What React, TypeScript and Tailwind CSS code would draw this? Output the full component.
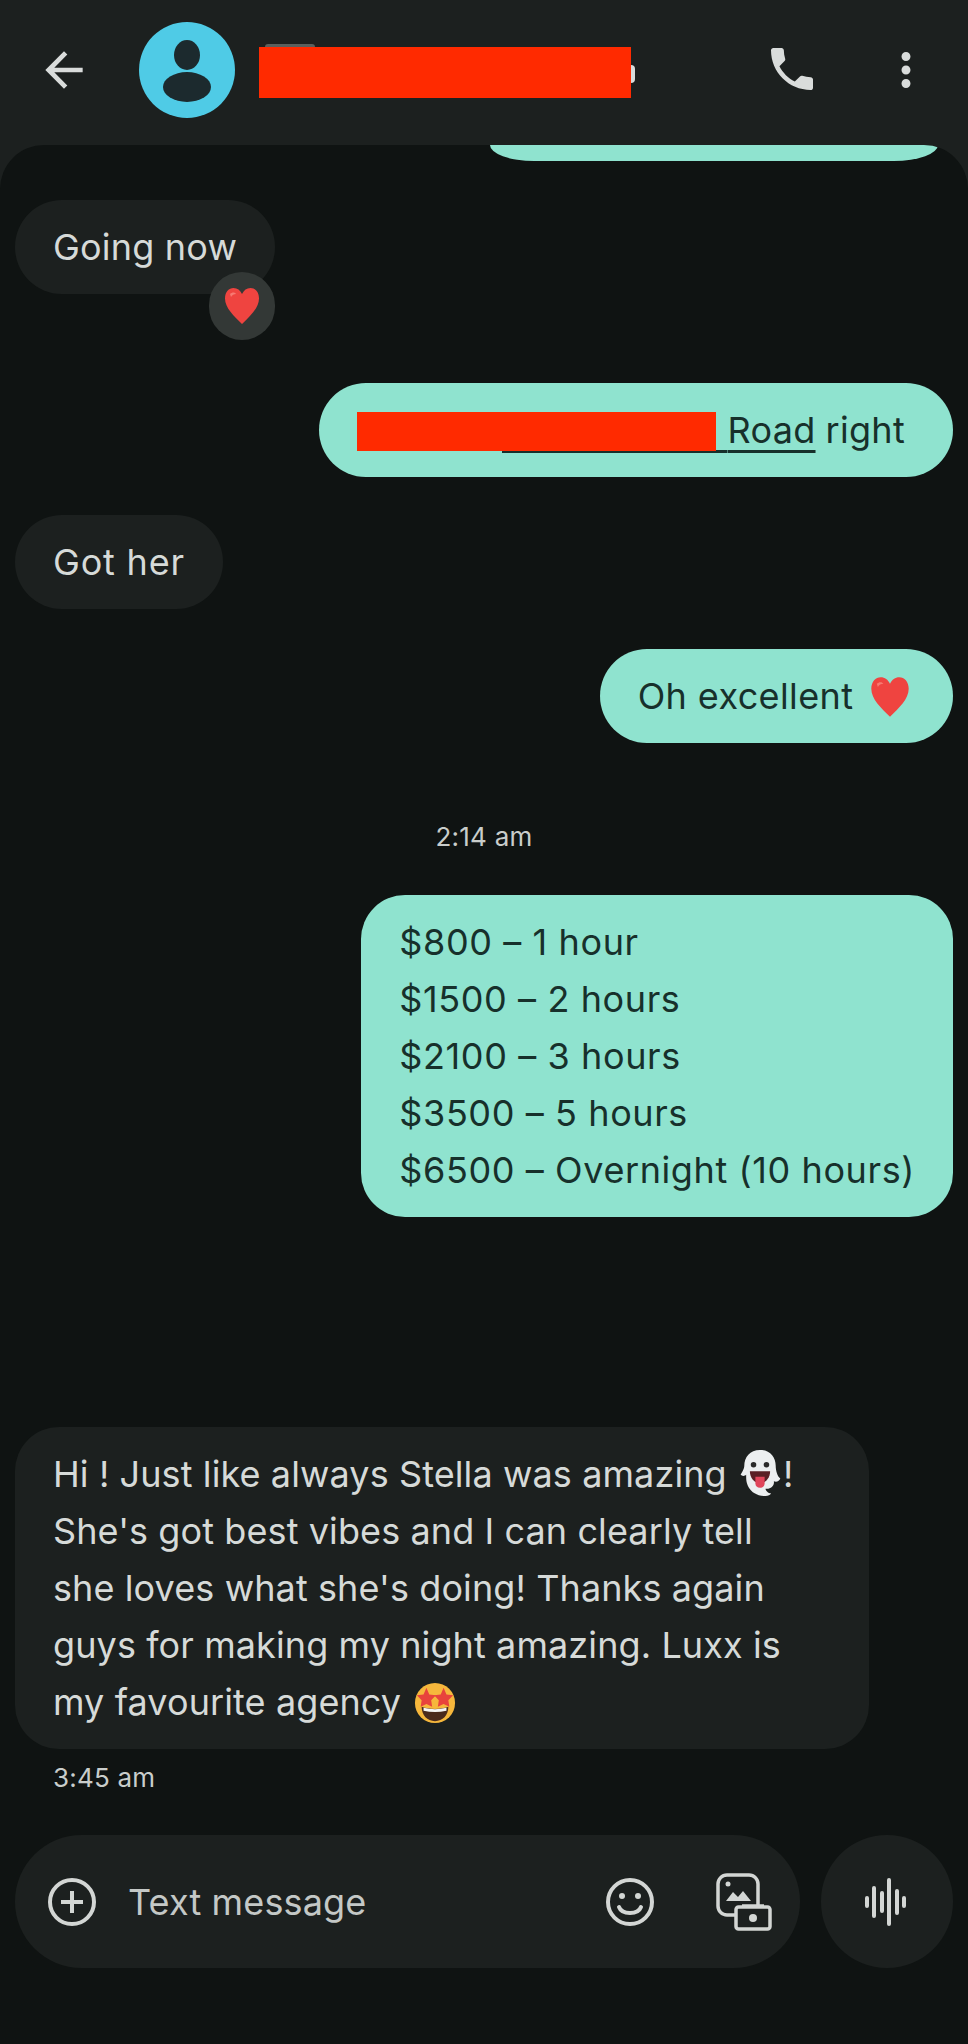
import type { ReactNode } from 'react';

const Heart = ({ className }: { className: string }) => (
    <svg viewBox="0 0 40 40" className={className}>
        <path d="M20 38C12 30 3 22 3 12.5 3 6 7 2 11.5 2c4 0 6.5 2 8.5 6 2-4 4.500-6 8.500-6C33 2 37 6 37 12.500 37 22 28 30 20 38z" fill="#ef4440" />
        <path d="M8 8c2-2 5-2 6 0-2 0-4 1-5 3z" fill="#f77a72" />
    </svg>
);

const Ghost = () => (
    <svg viewBox="0 0 44 52" className="inline-block w-[46px] h-[48px] align-[-10px]">
        <path d="M22 1C11 1 5 9 5 18c0 4-3 8-4 10 2 2 5 1 6 0 0 5 0 9 3 14 3 5 9 9 18 9 3 0 5-1 6-3-3 0-6-3-6-5 5 1 10-3 9-8 3 1 6 0 7-3-3-2-5-8-5-14C39 9 33 1 22 1z" fill="#eceff0" />
        <circle cx="15" cy="17" r="3" fill="#2a2a2a" />
        <circle cx="29" cy="17" r="3" fill="#2a2a2a" />
        <path d="M11 24h22c0 7-5 13-11 13s-11-6-11-13z" fill="#5a1f24" />
        <path d="M17 30h10v7c0 3-2 5-5 5s-5-2-5-5z" fill="#e0455a" />
    </svg>
);

const StarStruck = () => (
    <svg viewBox="0 0 44 44" className="inline-block w-[42px] h-[42px] align-[-9px] ml-[3px]">
        <circle cx="22" cy="22" r="21" fill="#f6b73c" />
        <path d="M13 6l3 7 7 1-5 5 1 7-6-3-6 3 1-7-5-5 7-1zM31 6l3 7 7 1-5 5 1 7-6-3-6 3 1-7-5-5 7-1z" fill="#e8433c" />
        <path d="M8 26c8 3 20 3 28 0 0 9-6 15-14 15S8 35 8 26z" fill="#4a2a1c" />
        <path d="M10 27c8 2 16 2 24 0v3c-8 2-16 2-24 0z" fill="#f5f5f5" />
    </svg>
);

const Bubble = ({ mine, className, children }: { mine?: boolean; className?: string; children: ReactNode }) => (
    <div
        className={`px-[38px] py-[18.5px] text-[36px] leading-[57px] whitespace-nowrap ${mine
            ? 'self-end bg-[#8fe3cf] text-[#17302b]'
            : 'self-start bg-[#1c201f] text-[#d6dad8]'
            } ${className ?? ''}`}
    >
        {children}
    </div>
);

const Icon = ({ d, className }: { d: string; className: string }) => (
    <svg viewBox="0 0 24 24" className={className} fill="currentColor">
        <path d={d} />
    </svg>
);

const prices = ['$800 – 1 hour', '$1500 – 2 hours', '$2100 – 3 hours', '$3500 – 5 hours', '$6500 – Overnight (10 hours)'];

const App = () => (
    <div className="w-[968px] h-[2044px] flex flex-col overflow-hidden bg-[#1c201f] font-['Inter',sans-serif]">
        {/* top bar */}
        <header className="h-[145px] shrink-0 flex items-center text-[#d9dcdb]">
            <Icon
                d="M20 11H7.83l5.59-5.59L12 4l-8 8 8 8 1.41-1.41L7.83 13H20v-2z"
                className="w-[56px] h-[56px] ml-[36px] -mt-[6px]"
            />
            <svg viewBox="0 0 96 96" className="w-[96px] h-[96px] ml-[47px] -mt-[6px]">
                <circle cx="48" cy="48" r="48" fill="#4fcbe6" />
                <ellipse cx="48" cy="33" rx="13" ry="15" fill="#1c2a2e" />
                <ellipse cx="48" cy="65" rx="24" ry="15" fill="#1c2a2e" />
            </svg>
            <div className="relative w-[372px] h-[51px] ml-[24px] bg-[#ff2a00]">
                {/* bits of the name showing past the redaction */}
                <span className="absolute left-[6px] -top-[3px] w-[50px] h-[3px] rounded-t-sm bg-[#5a5f5d]" />
                <span className="absolute -right-[4px] top-[18px] w-[4px] h-[18px] rounded-r-full bg-[#d9dcdb]" />
            </div>
            <Icon
                d="M6.62 10.79c1.44 2.83 3.76 5.14 6.59 6.59l2.2-2.2c.27-.27.67-.36 1.02-.24 1.12.37 2.33.57 3.57.57.55 0 1 .45 1 1V20c0 .55-.45 1-1 1-9.39 0-17-7.61-17-17 0-.55.45-1 1-1h3.5c.55 0 1 .45 1 1 0 1.25.2 2.45.57 3.57.11.35.03.74-.25 1.02l-2.2 2.2z"
                className="w-[56px] h-[56px] ml-[133px] -mt-[8px]"
            />
            <Icon
                d="M12 8c1.1 0 2-.9 2-2s-.9-2-2-2-2 .9-2 2 .9 2 2 2zm0 2c-1.1 0-2 .9-2 2s.9 2 2 2 2-.9 2-2-.9-2-2-2zm0 6c-1.1 0-2 .9-2 2s.9 2 2 2 2-.9 2-2-.9-2-2-2z"
                className="w-[54px] h-[54px] ml-[59px] -mt-[6px]"
            />
        </header>

        <main className="flex-1 flex flex-col px-[15px] rounded-t-[44px] bg-[#0f1312] overflow-hidden">
            {/* tail of the previous message, scrolled under the bar */}
            <div className="self-end w-[448px] h-[16px] mr-[15px] shrink-0 bg-[#8fe3cf] rounded-b-[44px_16px]" />

            <div className="relative self-start mt-[39px]">
                <Bubble className="rounded-[47px] tracking-[0.2px]">Going now</Bubble>
                <div className="absolute right-0 top-[72px] w-[66px] h-[68px] rounded-full bg-[#333836] flex items-center justify-center">
                    <Heart className="w-[40px] h-[40px]" />
                </div>
            </div>

            <Bubble mine className="mt-[89px] rounded-[47px] pr-[48px] tracking-[0.3px]">
                <span className="flex items-center">
                    <span className="relative inline-block w-[370px] h-[57px]">
                        <span className="absolute left-[145px] right-0 bottom-[6px] h-[3px] bg-[#17302b]" />
                        <span className="absolute left-0 top-[10px] w-[359px] h-[39px] bg-[#ff2a00]" />
                    </span>
                    <span className="underline underline-offset-[7px] decoration-[3px]">Road</span>
                    <span className="ml-[10px]">right</span>
                </span>
            </Bubble>

            <Bubble className="mt-[38px] rounded-[47px] tracking-[0.8px]">Got her</Bubble>

            <Bubble mine className="mt-[40px] rounded-[47px] pr-[41px] tracking-[0.4px]">
                Oh excellent <Heart className="inline-block w-[44px] h-[44px] align-[-10px] ml-[4px]" />
            </Bubble>

            <p className="mt-[77px] self-center text-[26px] leading-[34px] tracking-[0.25px] text-[#c9cdcb]">2:14 am</p>

            <Bubble mine className="mt-[41px] rounded-[44px] tracking-[0.6px]">
                {prices.map((line) => (
                    <div key={line}>{line}</div>
                ))}
            </Bubble>

            <Bubble className="mt-[210px] w-[854px] rounded-[44px] tracking-[0.1px]">
                Hi ! Just like always Stella was amazing <Ghost />!
                <br />
                She's got best vibes and I can clearly tell
                <br />
                she loves what she's doing! Thanks again
                <br />
                guys for making my night amazing. Luxx is
                <br />
                my favourite agency <StarStruck />
            </Bubble>

            <p className="mt-[12px] ml-[38px] text-[26px] leading-[34px] tracking-[0.2px] text-[#c9cdcb]">3:45 am</p>

            {/* composer */}
            <div className="mt-[40px] flex items-center gap-[21px] text-[#d3d6d4]">
                <div className="w-[785px] h-[133px] rounded-full bg-[#1c201f] flex items-center pl-[33px]">
                    <svg viewBox="0 0 48 48" className="w-[48px] h-[48px]" fill="none" stroke="currentColor" strokeWidth="4">
                        <circle cx="24" cy="24" r="22" />
                        <path d="M24 13v22M13 24h22" />
                    </svg>
                    <span className="ml-[32px] text-[36px] tracking-[0.15px] text-[#c4c8c6]">Text message</span>
                    <svg viewBox="0 0 48 48" className="w-[48px] h-[48px] ml-auto" fill="none" stroke="currentColor" strokeWidth="4">
                        <circle cx="24" cy="24" r="22" />
                        <circle cx="16" cy="18" r="3" fill="currentColor" stroke="none" />
                        <circle cx="32" cy="18" r="3" fill="currentColor" stroke="none" />
                        <path d="M13 29c3 8 19 8 22 0" strokeLinecap="round" />
                    </svg>
                    <svg viewBox="0 0 56 58" className="w-[56px] h-[58px] ml-[62px] mr-[28px]" fill="none" stroke="currentColor" strokeWidth="3.500">
                        <rect x="2" y="2" width="40" height="40" rx="9" />
                        <circle cx="12" cy="11" r="2.500" fill="currentColor" stroke="none" />
                        <path d="M10 28l7-9 5 5 5-6 8 10z" fill="currentColor" stroke="none" />
                        <rect x="20" y="34" width="34" height="22" rx="2.500" fill="#1c201f" />
                        <path d="M26 33h22" />
                        <circle cx="37" cy="45" r="4" fill="currentColor" stroke="none" />
                    </svg>
                </div>
                <div className="w-[132px] h-[133px] rounded-full bg-[#1c201f] flex items-center justify-center">
                    <svg viewBox="0 0 44 48" className="w-[44px] h-[48px] -ml-[2px]" fill="none" stroke="currentColor" strokeWidth="4" strokeLinecap="round">
                        <path d="M3 20v8M10 10v28M18 15v18M25 2v44M33 13v22M40 20v8" />
                    </svg>
                </div>
            </div>
        </main>
    </div>
);

export default App;
